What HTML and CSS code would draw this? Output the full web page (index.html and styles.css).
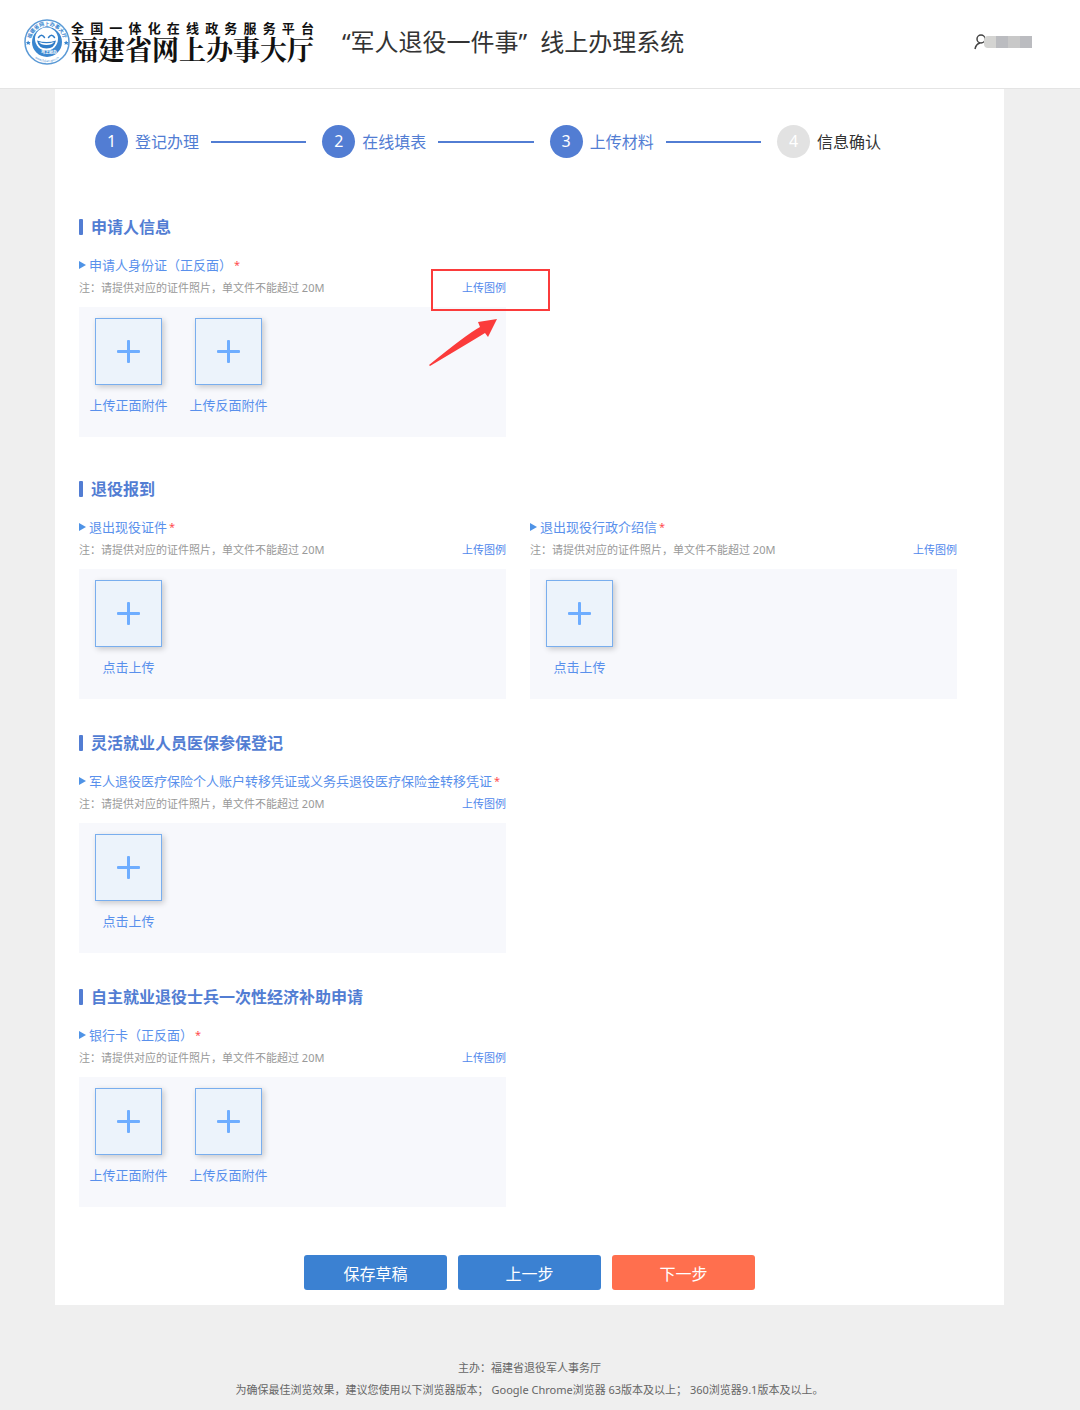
FILE: index.html
```html
<!DOCTYPE html>
<html lang="zh-CN">

<head>
    <meta charset="UTF-8">
    <meta name="viewport" content="width=device-width, initial-scale=1.0">
    <title>“军人退役一件事”线上办理系统</title>
    <link rel="stylesheet" href="styles.css">
</head>

<body>
    <header class="header">
        <a class="logo" href="#">
            <svg class="logo-seal" viewBox="0 0 92 92" aria-hidden="true">
                <defs>
                    <path id="seal-top" d="M13 46 A33 33 0 0 1 79 46" />
                    <path id="seal-bottom" d="M6 46 A40 40 0 0 0 86 46" />
                </defs>
                <circle cx="46" cy="46" r="44" fill="#fff" stroke="#5b9ad6" stroke-width="3" />
                <circle cx="46" cy="46" r="30" fill="#3a86cf" />
                <circle cx="45" cy="40" r="23" fill="#fff" />
                <path d="M29 37 q6 -9 12 0 M49 37 q6 -9 12 0" fill="none" stroke="#2f7cc8" stroke-width="3" stroke-linecap="round" />
                <path d="M26 43 q19 6 38 0 q-3 16 -19 16 q-16 0 -19 -16 Z" fill="#2f7cc8" />
                <path d="M30 46 q15 5 30 0 q-3 6 -15 6 q-12 0 -15 -6 Z" fill="#fff" />
                <path d="M8 43 l2 3 3 0 -2 3 1 3 -4 -2 -3 2 1 -3 -2 -3 3 0 Z M84 43 l2 3 3 0 -2 3 1 3 -4 -2 -3 2 1 -3 -2 -3 3 0 Z" fill="#3a86cf" />
                <text class="seal-name"><textPath href="#seal-top" startOffset="50%">福建省网上办事大厅</textPath></text>
                <text class="seal-url"><textPath href="#seal-bottom" startOffset="50%">www.fujian.gov.cn</textPath></text>
                <text class="seal-tag" x="50" y="70">马上就办</text>
            </svg>
            <span class="logo-text">
                <span class="logo-sub">全国一体化在线政务服务平台</span>
                <span class="logo-name">福建省网上办事大厅</span>
            </span>
        </a>
        <h1 class="system-title"><span>“军人退役一件事”</span><span>线上办理系统</span></h1>
        <div class="user">
            <svg class="user-icon" viewBox="0 0 14 16" aria-hidden="true">
                <circle cx="7" cy="5" r="4" />
                <path d="M1 15 Q2 10 6 9" />
            </svg>
            <span class="user-name"><i></i><i></i><i></i><i></i></span>
        </div>
    </header>

    <main class="page">
        <ol class="steps">
            <li class="step"><span class="step-num">1</span><span class="step-label">登记办理</span></li>
            <li class="step"><span class="step-num">2</span><span class="step-label">在线填表</span></li>
            <li class="step"><span class="step-num">3</span><span class="step-label">上传材料</span></li>
            <li class="step todo"><span class="step-num">4</span><span class="step-label">信息确认</span></li>
        </ol>

        <form class="form">
            <section class="section first">
                <h2>申请人信息</h2>
                <div class="materials">
                    <div class="material">
                        <h3>申请人身份证（正反面）<span class="required">*</span></h3>
                        <div class="note">
                            <span>注：请提供对应的证件照片，单文件不能超过 20M</span>
                            <a href="#">上传图例</a>
                            <span class="highlight"></span>
                            <svg class="arrow" viewBox="0 0 69 48" aria-hidden="true">
                                <path d="M68 0 L49 3 L51 8 Q38 15 0 46 L1 47 Q38 25 56 14 L59 18 Z" />
                            </svg>
                        </div>
                        <div class="upload-panel">
                            <button type="button" class="upload"><span class="upload-box"></span>上传正面附件</button>
                            <button type="button" class="upload"><span class="upload-box"></span>上传反面附件</button>
                        </div>
                    </div>
                </div>
            </section>

            <section class="section">
                <h2>退役报到</h2>
                <div class="materials">
                    <div class="material">
                        <h3>退出现役证件<span class="required">*</span></h3>
                        <div class="note">
                            <span>注：请提供对应的证件照片，单文件不能超过 20M</span>
                            <a href="#">上传图例</a>
                        </div>
                        <div class="upload-panel">
                            <button type="button" class="upload"><span class="upload-box"></span>点击上传</button>
                        </div>
                    </div>
                    <div class="material">
                        <h3>退出现役行政介绍信<span class="required">*</span></h3>
                        <div class="note">
                            <span>注：请提供对应的证件照片，单文件不能超过 20M</span>
                            <a href="#">上传图例</a>
                        </div>
                        <div class="upload-panel">
                            <button type="button" class="upload"><span class="upload-box"></span>点击上传</button>
                        </div>
                    </div>
                </div>
            </section>

            <section class="section">
                <h2>灵活就业人员医保参保登记</h2>
                <div class="materials">
                    <div class="material">
                        <h3>军人退役医疗保险个人账户转移凭证或义务兵退役医疗保险金转移凭证<span class="required">*</span></h3>
                        <div class="note">
                            <span>注：请提供对应的证件照片，单文件不能超过 20M</span>
                            <a href="#">上传图例</a>
                        </div>
                        <div class="upload-panel">
                            <button type="button" class="upload"><span class="upload-box"></span>点击上传</button>
                        </div>
                    </div>
                </div>
            </section>

            <section class="section">
                <h2>自主就业退役士兵一次性经济补助申请</h2>
                <div class="materials">
                    <div class="material">
                        <h3>银行卡（正反面）<span class="required">*</span></h3>
                        <div class="note">
                            <span>注：请提供对应的证件照片，单文件不能超过 20M</span>
                            <a href="#">上传图例</a>
                        </div>
                        <div class="upload-panel">
                            <button type="button" class="upload"><span class="upload-box"></span>上传正面附件</button>
                            <button type="button" class="upload"><span class="upload-box"></span>上传反面附件</button>
                        </div>
                    </div>
                </div>
            </section>
        </form>

        <div class="actions">
            <button type="button" class="btn">保存草稿</button>
            <button type="button" class="btn">上一步</button>
            <button type="button" class="btn btn-next">下一步</button>
        </div>
    </main>

    <footer class="footer">
        <p>主办：福建省退役军人事务厅</p>
        <p>为确保最佳浏览效果，建议您使用以下浏览器版本； Google Chrome浏览器 63版本及以上； 360浏览器9.1版本及以上。</p>
    </footer>
</body>

</html>
```

FILE: styles.css
```css
* {
    box-sizing: border-box;
}

body {
    margin: 0;
    background-color: #efefef;
    color: #333;
    font-family: "Noto Sans", "Noto Sans CJK SC", sans-serif;
}

h1,
h2,
h3,
p {
    margin: 0;
}

a {
    text-decoration: none;
}

button {
    font-family: inherit;
    border: none;
    cursor: pointer;
}

/* header */
.header {
    display: flex;
    align-items: center;
    padding: 19px 48px 23px 24px;
    background-color: #fff;
    border-bottom: 1px solid #e4e4e4;
}

.logo {
    display: flex;
    align-items: center;
    gap: 1px;
    color: #111;
}

.logo-seal {
    width: 46px;
    height: 46px;
}

.seal-name {
    font-size: 10px;
    font-weight: bold;
    fill: #3a86cf;
    text-anchor: middle;
}

.seal-url {
    font-size: 6px;
    fill: #3a86cf;
    text-anchor: middle;
}

.seal-tag {
    font-size: 8px;
    font-weight: bold;
    fill: #fff;
    text-anchor: middle;
}

.logo-text {
    display: flex;
    flex-direction: column;
    font-weight: bold;
}

.logo-sub {
    font-size: 13px;
    line-height: 18px;
    text-align: justify;
    text-align-last: justify;
}

.logo-name {
    font-family: "Liberation Serif", "Noto Serif CJK SC", "Noto Sans CJK SC", serif;
    font-size: 27px;
    line-height: 28px;
}

.system-title {
    display: flex;
    gap: 13px;
    margin-left: 28px;
    font-size: 24px;
    font-weight: normal;
    line-height: 32px;
}

.user {
    display: flex;
    align-items: center;
    margin-left: auto;
}

.user-icon {
    width: 14px;
    height: 16px;
    margin-right: -4px;
    fill: none;
    stroke: #444;
    stroke-width: 1.5;
}

.user-name {
    display: flex;
    z-index: 1;
    overflow: hidden;
    border-radius: 4px 0 0 4px;
}

.user-name i {
    width: 12px;
    height: 12px;
    background-color: #bbbcc0;
}

.user-name i:nth-child(odd) {
    background-color: #c8c8c8;
}

.user-name i:first-child {
    background-color: #d4d4d2;
}

/* page */
.page {
    margin: 0 76px 0 55px;
    padding: 36px 0 15px;
    background-color: #fff;
}

.steps {
    display: flex;
    margin: 0;
    padding: 0 123px 0 40px;
    list-style: none;
}

.step {
    display: flex;
    flex: 1;
    align-items: center;
    color: #527dd3;
    font-size: 16px;
    line-height: 24px;
}

.step::after {
    content: "";
    flex: 1;
    height: 2px;
    margin: 0 16px 0 12px;
    background-color: #527dd3;
}

.step-num {
    width: 33px;
    height: 33px;
    margin-right: 7px;
    border-radius: 50%;
    background-color: #527dd3;
    color: #fff;
    line-height: 33px;
    text-align: center;
}

.step.todo {
    flex: none;
    color: #333;
}

.step.todo::after {
    display: none;
}

.step.todo .step-num {
    background-color: #e2e2e2;
}

.form {
    padding: 57px 47px 0 24px;
}

.section {
    margin-bottom: 32px;
}

.section.first {
    margin-bottom: 40px;
}

.section:last-child {
    margin-bottom: 0;
}

.section h2 {
    display: flex;
    align-items: center;
    gap: 8px;
    margin-bottom: 14px;
    color: #527dd3;
    font-size: 16px;
    line-height: 24px;
}

.section h2::before {
    content: "";
    width: 4px;
    height: 16px;
    border-radius: 1px;
    background-color: #527dd3;
}

.materials {
    display: grid;
    grid-template-columns: 1fr 1fr;
    gap: 24px;
}

.material h3 {
    display: flex;
    align-items: center;
    color: #5990ec;
    font-size: 13px;
    font-weight: normal;
    line-height: 24px;
    white-space: nowrap;
}

.material h3::before {
    content: "";
    margin-right: 3px;
    border-left: 7px solid #4f93e6;
    border-top: 4px solid transparent;
    border-bottom: 4px solid transparent;
}

.required {
    margin-left: 2px;
    color: #ff4d4f;
    font-size: 11px;
}

.note {
    position: relative;
    display: flex;
    justify-content: space-between;
    margin-bottom: 8px;
    color: #999;
    font-size: 11px;
    line-height: 22px;
}

.note a {
    color: #5088ec;
}

/* red frame and arrow over the sample link */
.highlight {
    position: absolute;
    top: -8px;
    right: -44px;
    width: 119px;
    height: 42px;
    border: 2px solid #fb3b3b;
    pointer-events: none;
}

.arrow {
    position: absolute;
    top: 42px;
    right: 8px;
    width: 69px;
    height: 48px;
    fill: #fb3b3b;
    pointer-events: none;
}

.upload-panel {
    display: flex;
    gap: 21px;
    padding: 11px 10px 22px;
    background-color: #f7f8fc;
}

.upload {
    display: flex;
    flex-direction: column;
    align-items: center;
    gap: 10px;
    width: 79px;
    padding: 0;
    background: none;
    color: #5990ec;
    font-size: 13px;
    line-height: 20px;
    white-space: nowrap;
}

.upload-box {
    display: grid;
    place-items: center;
    width: 67px;
    height: 67px;
    border: 1px solid #79aeee;
    background-color: #ecf3fb;
    box-shadow: 2px 2px 6px rgba(0, 0, 0, 0.2);
}

.upload-box::before,
.upload-box::after {
    content: "";
    grid-area: 1 / 1;
    width: 23px;
    height: 3px;
    border-radius: 1px;
    background-color: #6eadff;
}

.upload-box::after {
    width: 3px;
    height: 23px;
}

.actions {
    display: flex;
    justify-content: center;
    gap: 11px;
    margin-top: 48px;
}

.btn {
    width: 143px;
    height: 35px;
    border-radius: 3px;
    background-color: #3b81d2;
    color: #fff;
    font-size: 16px;
}

.btn-next {
    background-color: #ff6f4e;
}

/* footer */
.footer {
    margin: 52px 76px 0 55px;
    padding-bottom: 9px;
    color: #666;
    font-size: 11px;
    line-height: 22px;
    text-align: center;
}
```
